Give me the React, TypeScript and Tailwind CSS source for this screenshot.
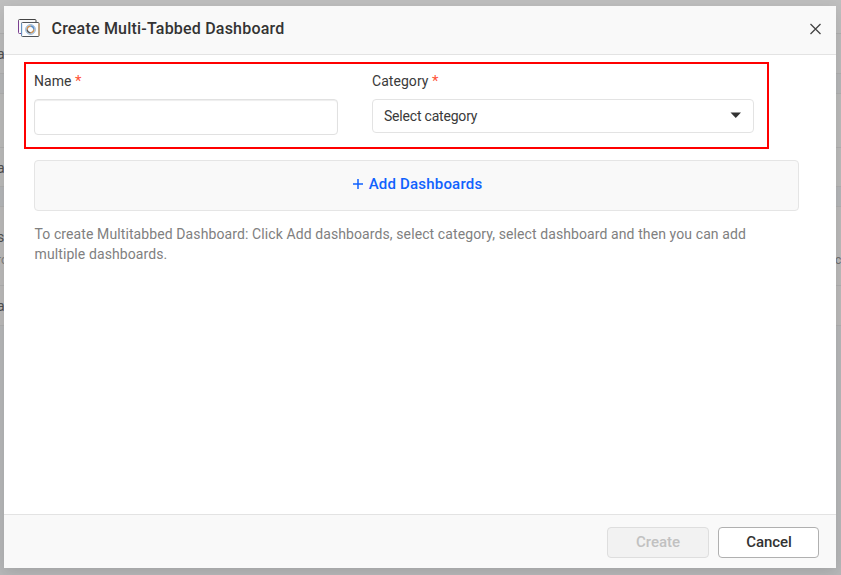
import type { ReactNode } from "react";

function BackdropRow({ className, left, right }: { className: string; left?: ReactNode; right?: string }) {
  return (
    <div className={`flex w-full shrink-0 justify-between border-b border-[#b0b0b0] text-[14px] leading-4 text-[#505050] ${className}`}>
      <div className="w-1">{left}</div>
      <div className="flex w-[6px] items-end text-[12px] text-[#707070]">{right}</div>
    </div>
  );
}

function Backdrop() {
  return (
    <div className="flex h-full flex-col bg-[#b7b8b9]">
      <BackdropRow className="h-[34px] bg-[#bfbfbf]" />
      <BackdropRow className="h-10 bg-[#bcbcbc] pt-3" left={<span className="-ml-[3px]">a</span>} />
      <BackdropRow className="h-5 bg-[#b7b8b9]" />
      <BackdropRow className="h-[54px] bg-[#bcbcbb]" />
      <BackdropRow className="h-[39px] bg-[#bcbcbb] pt-3" left={<span className="-ml-[3px]">a</span>} />
      <BackdropRow className="h-5 bg-[#b5b7b9]" />
      <BackdropRow
        className="h-[79px] bg-[#bcbbba] pt-[22px] pb-[17px]"
        left={
          <div className="-ml-[3px] flex flex-col gap-[7px]">
            <span>s</span>
            <span className="text-[12px] text-[#808080]">ro</span>
          </div>
        }
        right="c"
      />
      <BackdropRow className="h-10 bg-[#bcbbba] pt-3" left={<span className="-ml-[3px]">a</span>} />
    </div>
  );
}

function TabsIcon() {
  return (
    <svg width="22" height="18" viewBox="0 0 22 18" fill="none">
      <path d="M3.5 14.500h-2a1 1 0 0 1-1-1v-12" stroke="#7b3f91" />
      <path d="M.5 1.500a1 1 0 0 1 1-1h15.500a1 1 0 0 1 1 1v2" stroke="#444" />
      <rect x="3.500" y="3.500" width="17.500" height="14" rx="1" fill="#fdfdfd" stroke="#505459" />
      <path d="M3.700 4.500v12" stroke="#6fa3d8" />
      <path d="M21 4.500v12" stroke="#d9a35c" />
      <circle cx="12.500" cy="10.500" r="4.800" stroke="#6f9fd0" strokeWidth=".9" />
      <circle cx="12.500" cy="10.500" r="3.300" stroke="#a5b4c4" strokeWidth="1.500" />
      <path d="M12.500 7.200a3.300 3.300 0 0 1 3.300 3.300" stroke="#5b8fca" strokeWidth="1.300" />
      <path d="M15.800 10.500a3.300 3.300 0 0 1-3.300 3.300" stroke="#d59450" strokeWidth="1.300" />
      <path d="M12.500 13.800a3.300 3.300 0 0 1-3.300-3.300" stroke="#555" strokeWidth="1.300" />
      <path d="M9.200 10.500a3.300 3.300 0 0 1 3.300-3.300" stroke="#d59450" strokeWidth="1.300" />
    </svg>
  );
}

function Label({ text }: { text: string }) {
  return (
    <div className="h-4 text-[14px] leading-4 tracking-[0.05px] whitespace-pre text-[#3a3a3a]">
      {text}<span className="ml-[3.500px] text-[15px] text-[#ff5238]">*</span>
    </div>
  );
}

export default function App() {
  return (
    <div className="relative h-[575px] w-[841px] overflow-hidden font-['Roboto',sans-serif]">
      <Backdrop />
      <section className="absolute top-1.5 left-1 flex h-[562px] w-[832px] flex-col bg-white shadow-[0_4px_14px_rgba(0,0,0,0.12)]">
        <header className="flex h-[49px] shrink-0 items-center border-b border-[#e3e3e3] bg-[#f9f9f9] pr-[15px] pl-3.5">
          <div className="pb-1"><TabsIcon /></div>
          <h1 className="ml-[11.500px] pb-[3px] text-[16px] leading-5 font-medium tracking-[0.2px] text-[#333]">Create Multi-Tabbed Dashboard</h1>
          <svg className="mb-[3px] ml-auto" width="12" height="12" viewBox="0 0 12 12">
            <path d="M1.500 1l10 10M11.500 1L1.500 11" stroke="#444" strokeWidth="1.300" />
          </svg>
        </header>
        <main className="flex-1 pt-[7px] pr-[37px] pl-5">
          <div className="flex h-[87px] w-[745px] gap-[34px] border-2 border-[#ff0000] pt-[9px] pl-2">
            <div className="w-[304px]">
              <Label text="Name" />
              <input className="mt-[10px] block h-9 w-full rounded border border-[#e1e1e1] bg-white shadow-[inset_0_1px_1px_rgba(0,0,0,0.07)] outline-none" />
            </div>
            <div className="w-[382px]">
              <Label text="Category" />
              <div className="mt-[10px] flex h-[34px] items-center justify-between rounded border border-[#e3e3e3] pr-3 pl-[11px] text-[14px] text-[#3a3a3a]">
                <span className="tracking-[-0.2px]">Select category</span>
                <svg className="mb-0.5" width="11" height="6" viewBox="0 0 11 6"><path d="M.5 .5h10.500L5.750 6z" fill="#333" /></svg>
              </div>
            </div>
          </div>
          <div className="ml-2.5 w-[765px]">
            <button className="mt-[11px] flex h-[51px] w-full items-center justify-center rounded border border-[#e5e5e5] bg-[#f9f9f9] pb-[3px] pl-0.5 text-[15px] font-medium tracking-[0.2px] text-[#1062fe]">
              <svg className="mr-1.5" width="10" height="10" viewBox="0 0 10 10"><path d="M0 5h10M5 0v10" stroke="#1062fe" strokeWidth="1.500" /></svg>
              Add Dashboards
            </button>
            <p className="mt-[13px] w-[740px] pl-[0.5px] text-[14px] leading-5 tracking-[0.1px] text-[#808080]">
              To create Multitabbed Dashboard: Click Add dashboards, select category, select dashboard and then you can add multiple dashboards.
            </p>
          </div>
        </main>
        <footer className="flex h-[54px] shrink-0 justify-end gap-[9px] border-t border-[#e3e3e3] bg-[#f9f9f9] pt-3 pr-[17px] text-[15px] font-medium">
          <button className="h-[31px] w-[102px] rounded border border-[#dedede] bg-[#f2f2f2] text-[#c1c1c1]">Create</button>
          <button className="h-[31px] w-[101px] rounded border border-[#b0b0b0] bg-white pl-px tracking-[-0.1px] text-[#333]">Cancel</button>
        </footer>
      </section>
    </div>
  );
}
